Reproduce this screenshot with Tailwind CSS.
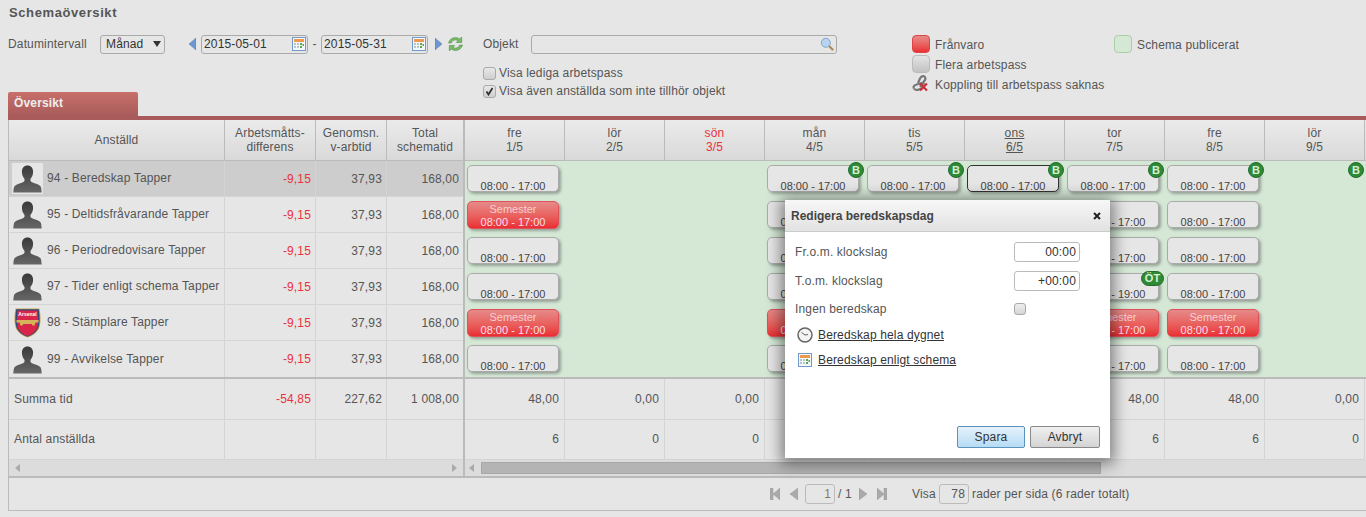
<!DOCTYPE html>
<html lang="sv"><head><meta charset="utf-8"><title>Schemaöversikt</title>
<script src="https://cdn.jsdelivr.net/npm/@tailwindcss/browser@4"></script></head>
<body class="m-0 w-[1366px] h-[517px] overflow-hidden relative bg-[#e6e6e6] font-['Liberation_Sans',Arial,sans-serif] text-[12px] text-[#555] tracking-[0.15px]">
<svg width="0" height="0" class="absolute"><defs>
<linearGradient id="sil" x1="0" y1="0" x2="0" y2="1"><stop offset="0" stop-color="#3a3a3a"/><stop offset="1" stop-color="#666"/></linearGradient>
<symbol id="person" viewBox="0 0 31 31"><path fill="url(#sil)" d="M15.500 2.500c3.600 0 5.600 2.700 5.600 6.200 0 3-1 5.300-2.500 7-.4 1.600-.1 2.700 1 3.400 2.500 1.300 6.800 2.100 8.700 4 .9 1 1.200 3.700 1.400 6.400H1.300c.2-2.700.5-5.400 1.400-6.400 1.900-1.900 6.200-2.700 8.700-4 1.100-.7 1.400-1.800 1-3.400-1.500-1.700-2.500-4-2.500-7 0-3.500 2-6.200 5.600-6.200z"/></symbol>
<symbol id="cal" viewBox="0 0 14 14"><rect x=".5" y=".5" width="13" height="13" fill="#f4f7fb" stroke="#6f9acb"/><rect x="2" y="2" width="10" height="3" fill="#ee9a4d"/><path fill="#b9c4cf" d="M2 6h2v2H2zM5 6h2v2H5zM2 9h2v2H2zM5 9h2v2H5z"/><path fill="#58a84f" d="M8 6h2v2H8zM8 9h2v2H8zM10.500 7h1.500v2h-1.500z"/></symbol>
</defs></svg>

<!-- Filter area -->
<header class="h-[92px]">
  <h1 class="pl-[9px] pt-[5px] h-[34px] text-[13px] leading-[16px] font-bold text-[#555] tracking-[0.6px]">Schemaöversikt</h1>
  <div class="flex items-start pl-[8px]">
    <div class="w-[475px] h-[20px] flex items-center">
      <span class="w-[92px]">Datumintervall</span>
      <div class="w-[65px] h-[19px] rounded-[3px] border border-[#aaa] flex items-center justify-between pl-[5px] pr-[3px] text-[#333]"><span>Månad</span><svg width="8" height="6" viewBox="0 0 8 6"><path fill="#333" d="M0 0h8L4 6z"/></svg></div>
      <svg class="ml-[24px]" width="7" height="12" viewBox="0 0 7 12"><path fill="#6c97cf" stroke="#4f79b3" stroke-width=".5" d="M7 0v12L0 6z"/></svg>
      <div class="ml-[5px] w-[107px] h-[19px] rounded-[3px] border border-[#aaa] flex items-center justify-between pl-[2px] pr-[1px] text-[#333]"><span>2015-05-01</span><svg width="14" height="14"><use href="#cal"/></svg></div>
      <span class="w-[13px] text-center">-</span>
      <div class="w-[107px] h-[19px] rounded-[3px] border border-[#aaa] flex items-center justify-between pl-[2px] pr-[1px] text-[#333]"><span>2015-05-31</span><svg width="14" height="14"><use href="#cal"/></svg></div>
      <svg class="ml-[7px]" width="7" height="12" viewBox="0 0 7 12"><path fill="#6c97cf" stroke="#4f79b3" stroke-width=".5" d="M0 0v12l7-6z"/></svg>
      <svg class="ml-[5px]" width="17" height="16" viewBox="0 0 16 15"><path fill="#7dbb6a" stroke="#4c8f45" stroke-width=".6" d="M1.500 6.500C2.300 3 5 1.500 8 1.500c1.700 0 3 .5 4 1.400L13.800 1v5h-5l1.600-1.600C9.700 3.800 9 3.600 8 3.600c-1.700 0-3.300 1-3.900 2.900zM14.500 8.500C13.700 12 11 13.500 8 13.500c-1.700 0-3-.5-4-1.400L2.200 14V9h5l-1.600 1.600c.7.6 1.400.8 2.400.8 1.700 0 3.300-1 3.900-2.900z"/></svg>
    </div>
    <div class="w-[429px]">
      <div class="h-[20px] flex items-center">
        <span class="w-[48px]">Objekt</span>
        <div class="w-[306px] h-[19px] rounded-[3px] border border-[#aaa] flex items-center justify-end pr-[2px]"><svg width="14" height="14" viewBox="0 0 14 14"><path stroke="#b08a5a" stroke-width="2.400" stroke-linecap="round" d="M9 9l3.500 3.500"/><circle cx="5.800" cy="5.800" r="4.500" fill="#b8d4f0" stroke="#7fa6d2"/></svg></div>
      </div>
      <label class="mt-[10px] h-[18px] flex items-center gap-[3px]"><span class="w-[13px] h-[13px] rounded-[3px] border border-[#aaa] bg-gradient-to-b from-[#e8e8e8] to-[#cfcfcf]"></span>Visa lediga arbetspass</label>
      <label class="h-[18px] flex items-center gap-[3px]"><span class="w-[13px] h-[13px] rounded-[3px] border border-[#aaa] bg-gradient-to-b from-[#e8e8e8] to-[#cfcfcf] flex items-center justify-center"><svg width="9" height="9" viewBox="0 0 9 9"><path fill="none" stroke="#333" stroke-width="1.800" d="M1.500 4.500l2 3L7.500 1"/></svg></span>Visa även anställda som inte tillhör objekt</label>
    </div>
    <div class="w-[202px]">
      <div class="h-[20px] flex items-center gap-[5px]"><span class="w-[18px] h-[18px] rounded-[4px] border border-[#d44] bg-gradient-to-b from-[#e58a8a] to-[#e92c33]"></span><span class="pt-[2px]">Frånvaro</span></div>
      <div class="h-[20px] flex items-center gap-[5px]"><span class="w-[18px] h-[18px] rounded-[4px] border border-[#bbb] bg-gradient-to-b from-[#e4e4e4] to-[#c2c2c2]"></span><span class="pt-[2px]">Flera arbetspass</span></div>
      <div class="h-[20px] flex items-center gap-[5px]"><svg width="18" height="18" viewBox="0 0 18 18"><g fill="none" stroke="#777" stroke-width="2.200"><path d="M8 12l5-7c1-2 0-3.500-1.500-3.800S9 1.500 8 3.500L6 8"/><path d="M2 13.500c-1-1.500 0-3.300 2-3.800l5-1.500c1.500-.4 2.800.5 3 1.500"/><path d="M2 13.500c1 1.500 3 1.700 5 1l4-1.500"/></g><path stroke="#c9303a" stroke-width="2.200" d="M8 8.500l7 7M15 8.500l-7 7"/></svg><span class="pt-[2px]">Koppling till arbetspass saknas</span></div>
    </div>
    <div class="flex items-center gap-[5px] h-[20px]"><span class="w-[18px] h-[18px] rounded-[4px] border border-[#a9cfa9] bg-[#d5e8d6]"></span><span class="pt-[2px]">Schema publicerat</span></div>
  </div>
</header>

<!-- Tab -->
<div class="pl-[8px] h-[24px]"><div class="w-[130px] h-[24px] rounded-t-[2px] bg-gradient-to-b from-[#c76f6b] to-[#a95c5a] pl-[6px] pt-[4px] font-bold text-[#eee] leading-[15px]">Översikt</div></div>
<div class="ml-[8px] h-[4px] bg-[#a85b5a]"></div>

<!-- Table -->
<main class="ml-[8px] border-l border-[#bbb] flex h-[358px] border-b border-b-[#bbb]">
  <section class="w-[456px] shrink-0 border-r-2 border-[#bbb]">
    <div class="grid grid-cols-[216px_91px_71px_76px] h-[41px] border-b border-[#bbb] bg-gradient-to-b from-[#ebebeb] to-[#d9d9d9] text-center leading-[14px]">
      <div class="border-r border-[#bbb] flex items-center justify-center">Anställd</div>
      <div class="border-r border-[#bbb] flex items-center justify-center">Arbetsmåtts-<br>differens</div>
      <div class="border-r border-[#bbb] flex items-center justify-center">Genomsn.<br>v-arbtid</div>
      <div class="flex items-center justify-center">Total<br>schematid</div>
    </div>
    <div class="grid grid-cols-[216px_91px_71px_76px] auto-rows-[36px] [&>div]:border-b [&>div]:border-[#d4d4d4] [&>div]:flex [&>div]:items-center whitespace-nowrap">
      <div class="border-r bg-[#cdcdcd] pl-[3px] gap-[4px]"><span class="bg-[#e6e6e6] w-[31px] h-[31px]"><svg width="31" height="31"><use href="#person"/></svg></span><span class="pb-[1px]">94 - Beredskap Tapper</span></div>
      <div class="border-r bg-[#cdcdcd] justify-end pr-[4px] text-[#e8323c]">-9,15</div><div class="border-r bg-[#cdcdcd] justify-end pr-[4px]">37,93</div><div class="bg-[#cdcdcd] justify-end pr-[4px]">168,00</div>
      <div class="border-r pl-[3px] gap-[4px]"><svg width="31" height="31"><use href="#person"/></svg><span class="pb-[1px]">95 - Deltidsfråvarande Tapper</span></div>
      <div class="border-r justify-end pr-[4px] text-[#e8323c]">-9,15</div><div class="border-r justify-end pr-[4px]">37,93</div><div class="justify-end pr-[4px]">168,00</div>
      <div class="border-r pl-[3px] gap-[4px]"><svg width="31" height="31"><use href="#person"/></svg><span class="pb-[1px]">96 - Periodredovisare Tapper</span></div>
      <div class="border-r justify-end pr-[4px] text-[#e8323c]">-9,15</div><div class="border-r justify-end pr-[4px]">37,93</div><div class="justify-end pr-[4px]">168,00</div>
      <div class="border-r pl-[3px] gap-[4px]"><svg width="31" height="31"><use href="#person"/></svg><span class="pb-[1px]">97 - Tider enligt schema Tapper</span></div>
      <div class="border-r justify-end pr-[4px] text-[#e8323c]">-9,15</div><div class="border-r justify-end pr-[4px]">37,93</div><div class="justify-end pr-[4px]">168,00</div>
      <div class="border-r pl-[3px] gap-[4px]"><svg width="31" height="31" viewBox="0 0 31 31"><path fill="#c8a24a" d="M3.500 1.500h24c1.500 8 1.500 16-1 21-2.500 4-6.500 6.500-11 8-4.500-1.500-8.500-4-11-8-2.500-5-2.500-13-1-21z"/><path fill="#2b4a7a" d="M4.300 2.300h22.400c1.300 7.500 1.300 15.500-1 20-2.300 3.800-6 6.200-10.200 7.500-4.200-1.300-7.900-3.700-10.200-7.500-2.300-4.500-2.300-12.500-1-20z"/><path fill="#d9254a" d="M5.500 3.500h20c1 7 1 14.500-1 18.800-2 3.400-5.200 5.500-9 6.700-3.800-1.200-7-3.300-9-6.700-2-4.300-2-11.800-1-18.800z"/><path fill="#d6b35a" d="M4.500 13h22v2.500h-3l-1 3h-2l-.7-1.500h-8.600l-.7 1.500h-2l-1-3h-3z"/><text x="15.500" y="9" text-anchor="middle" font-size="5" font-weight="700" fill="#fff" letter-spacing="0">Arsenal</text></svg><span class="pb-[1px]">98 - Stämplare Tapper</span></div>
      <div class="border-r justify-end pr-[4px] text-[#e8323c]">-9,15</div><div class="border-r justify-end pr-[4px]">37,93</div><div class="justify-end pr-[4px]">168,00</div>
      <div class="border-r pl-[3px] gap-[4px] !border-b-0"><svg width="31" height="31"><use href="#person"/></svg><span class="pb-[1px]">99 - Avvikelse Tapper</span></div>
      <div class="border-r justify-end pr-[4px] text-[#e8323c] !border-b-0">-9,15</div><div class="border-r justify-end pr-[4px] !border-b-0">37,93</div><div class="justify-end pr-[4px] !border-b-0">168,00</div>
    </div>
    <div class="grid grid-cols-[216px_91px_71px_76px] border-t-2 border-[#bbb] [&>div]:border-b [&>div]:border-[#d4d4d4] [&>div]:flex [&>div]:items-center">
      <div class="h-[41px] border-r pl-[5px]">Summa tid</div><div class="h-[41px] border-r justify-end pr-[4px] text-[#e8323c]">-54,85</div><div class="h-[41px] border-r justify-end pr-[4px]">227,62</div><div class="h-[41px] justify-end pr-[4px]">1 008,00</div>
      <div class="h-[40px] border-r pl-[5px] pb-[2px]">Antal anställda</div><div class="h-[40px] border-r"></div><div class="h-[40px] border-r"></div><div class="h-[40px]"></div>
    </div>
    <div class="h-[17px] bg-[#dcdcdc] border-b border-b-[#bbb] flex items-center justify-between px-[6px]"><svg width="5" height="8"><path fill="#aaa" d="M5 0v8L0 4z"/></svg><svg width="5" height="8"><path fill="#aaa" d="M0 0v8l5-4z"/></svg></div>
  </section>
  <section class="flex-1 min-w-0 overflow-hidden">
    <div class="grid grid-cols-[repeat(9,100px)] h-[41px] border-b border-[#bbb] bg-gradient-to-b from-[#ebebeb] to-[#d9d9d9] text-center leading-[14px] [&>div]:border-r [&>div]:border-[#bbb] [&>div]:pt-[6px]">
      <div>fre<br>1/5</div><div>lör<br>2/5</div><div class="text-[#e8323c]">sön<br>3/5</div><div>mån<br>4/5</div><div>tis<br>5/5</div><div class="underline">ons<br>6/5</div><div>tor<br>7/5</div><div>fre<br>8/5</div><div>lör<br>9/5</div>
    </div>
    <div class="grid grid-cols-[repeat(9,100px)] auto-rows-[36px] bg-[#d5e8d6] text-center text-[11px] tracking-normal leading-[13px] text-[#444]">
      <!-- 94 -->
      <div><div class="ml-[2px] mt-[4px] w-[92px] h-[27px] rounded-[5px] border border-[#aaa] bg-[#e6e6e6] shadow-[2px_2px_3px_rgba(0,0,0,.3)] pt-[14px]">08:00 - 17:00</div></div><div></div><div></div>
      <div class="relative"><div class="ml-[2px] mt-[4px] w-[92px] h-[27px] rounded-[5px] border border-[#aaa] bg-[#e6e6e6] shadow-[2px_2px_3px_rgba(0,0,0,.3)] pt-[14px]">08:00 - 17:00</div><span class="absolute right-[1px] top-[1px] w-[16px] h-[16px] rounded-full bg-[#2f8a36] border border-[#236b2a] text-[#d8f0d8] font-bold text-[11px] leading-[14px] tracking-normal">B</span></div>
      <div class="relative"><div class="ml-[2px] mt-[4px] w-[92px] h-[27px] rounded-[5px] border border-[#aaa] bg-[#e6e6e6] shadow-[2px_2px_3px_rgba(0,0,0,.3)] pt-[14px]">08:00 - 17:00</div><span class="absolute right-[1px] top-[1px] w-[16px] h-[16px] rounded-full bg-[#2f8a36] border border-[#236b2a] text-[#d8f0d8] font-bold text-[11px] leading-[14px] tracking-normal">B</span></div>
      <div class="relative"><div class="ml-[2px] mt-[4px] w-[92px] h-[27px] rounded-[5px] border border-[#333] bg-[#e6e6e6] shadow-[2px_2px_3px_rgba(0,0,0,.3)] pt-[14px]">08:00 - 17:00</div><span class="absolute right-[1px] top-[1px] w-[16px] h-[16px] rounded-full bg-[#2f8a36] border border-[#236b2a] text-[#d8f0d8] font-bold text-[11px] leading-[14px] tracking-normal">B</span></div>
      <div class="relative"><div class="ml-[2px] mt-[4px] w-[92px] h-[27px] rounded-[5px] border border-[#aaa] bg-[#e6e6e6] shadow-[2px_2px_3px_rgba(0,0,0,.3)] pt-[14px]">08:00 - 17:00</div><span class="absolute right-[1px] top-[1px] w-[16px] h-[16px] rounded-full bg-[#2f8a36] border border-[#236b2a] text-[#d8f0d8] font-bold text-[11px] leading-[14px] tracking-normal">B</span></div>
      <div class="relative"><div class="ml-[2px] mt-[4px] w-[92px] h-[27px] rounded-[5px] border border-[#aaa] bg-[#e6e6e6] shadow-[2px_2px_3px_rgba(0,0,0,.3)] pt-[14px]">08:00 - 17:00</div><span class="absolute right-[1px] top-[1px] w-[16px] h-[16px] rounded-full bg-[#2f8a36] border border-[#236b2a] text-[#d8f0d8] font-bold text-[11px] leading-[14px] tracking-normal">B</span></div>
      <div class="relative"><span class="absolute right-[1px] top-[1px] w-[16px] h-[16px] rounded-full bg-[#2f8a36] border border-[#236b2a] text-[#d8f0d8] font-bold text-[11px] leading-[14px] tracking-normal">B</span></div>
      <!-- 95 -->
      <div><div class="ml-[2px] mt-[4px] w-[92px] h-[28px] rounded-[5px] border border-[#e05058] bg-gradient-to-b from-[#e58a8a] to-[#e92c33] shadow-[2px_2px_3px_rgba(0,0,0,.3)] text-[#fde] pt-[1px]"><span class="block text-[#f6cfcf]">Semester</span>08:00 - 17:00</div></div><div></div><div></div>
      <div><div class="ml-[2px] mt-[4px] w-[92px] h-[27px] rounded-[5px] border border-[#aaa] bg-[#e6e6e6] shadow-[2px_2px_3px_rgba(0,0,0,.3)] pt-[14px]">08:00 - 17:00</div></div><div></div><div></div>
      <div><div class="ml-[2px] mt-[4px] w-[92px] h-[27px] rounded-[5px] border border-[#aaa] bg-[#e6e6e6] shadow-[2px_2px_3px_rgba(0,0,0,.3)] pt-[14px]">08:00 - 17:00</div></div>
      <div><div class="ml-[2px] mt-[4px] w-[92px] h-[27px] rounded-[5px] border border-[#aaa] bg-[#e6e6e6] shadow-[2px_2px_3px_rgba(0,0,0,.3)] pt-[14px]">08:00 - 17:00</div></div><div></div>
      <!-- 96 -->
      <div><div class="ml-[2px] mt-[4px] w-[92px] h-[27px] rounded-[5px] border border-[#aaa] bg-[#e6e6e6] shadow-[2px_2px_3px_rgba(0,0,0,.3)] pt-[14px]">08:00 - 17:00</div></div><div></div><div></div>
      <div><div class="ml-[2px] mt-[4px] w-[92px] h-[27px] rounded-[5px] border border-[#aaa] bg-[#e6e6e6] shadow-[2px_2px_3px_rgba(0,0,0,.3)] pt-[14px]">08:00 - 17:00</div></div><div></div><div></div>
      <div><div class="ml-[2px] mt-[4px] w-[92px] h-[27px] rounded-[5px] border border-[#aaa] bg-[#e6e6e6] shadow-[2px_2px_3px_rgba(0,0,0,.3)] pt-[14px]">08:00 - 17:00</div></div>
      <div><div class="ml-[2px] mt-[4px] w-[92px] h-[27px] rounded-[5px] border border-[#aaa] bg-[#e6e6e6] shadow-[2px_2px_3px_rgba(0,0,0,.3)] pt-[14px]">08:00 - 17:00</div></div><div></div>
      <!-- 97 -->
      <div><div class="ml-[2px] mt-[4px] w-[92px] h-[27px] rounded-[5px] border border-[#aaa] bg-[#e6e6e6] shadow-[2px_2px_3px_rgba(0,0,0,.3)] pt-[14px]">08:00 - 17:00</div></div><div></div><div></div>
      <div><div class="ml-[2px] mt-[4px] w-[92px] h-[27px] rounded-[5px] border border-[#aaa] bg-[#e6e6e6] shadow-[2px_2px_3px_rgba(0,0,0,.3)] pt-[14px]">08:00 - 17:00</div></div><div></div><div></div>
      <div class="relative"><div class="ml-[2px] mt-[4px] w-[92px] h-[27px] rounded-[5px] border border-[#aaa] bg-[#e6e6e6] shadow-[2px_2px_3px_rgba(0,0,0,.3)] pt-[14px]">08:00 - 19:00</div><span class="absolute right-[1px] top-[2px] w-[23px] h-[15px] rounded-full bg-[#2f8a36] border border-[#236b2a] text-[#d8f0d8] font-bold text-[11px] leading-[13px] tracking-normal">ÖT</span></div>
      <div><div class="ml-[2px] mt-[4px] w-[92px] h-[27px] rounded-[5px] border border-[#aaa] bg-[#e6e6e6] shadow-[2px_2px_3px_rgba(0,0,0,.3)] pt-[14px]">08:00 - 17:00</div></div><div></div>
      <!-- 98 -->
      <div><div class="ml-[2px] mt-[4px] w-[92px] h-[28px] rounded-[5px] border border-[#e05058] bg-gradient-to-b from-[#e58a8a] to-[#e92c33] shadow-[2px_2px_3px_rgba(0,0,0,.3)] text-[#fde] pt-[1px]"><span class="block text-[#f6cfcf]">Semester</span>08:00 - 17:00</div></div><div></div><div></div>
      <div><div class="ml-[2px] mt-[4px] w-[92px] h-[28px] rounded-[5px] border border-[#e05058] bg-gradient-to-b from-[#e58a8a] to-[#e92c33] shadow-[2px_2px_3px_rgba(0,0,0,.3)] text-[#fde] pt-[1px]"><span class="block text-[#f6cfcf]">Semester</span>08:00 - 17:00</div></div><div></div><div></div>
      <div><div class="ml-[2px] mt-[4px] w-[92px] h-[28px] rounded-[5px] border border-[#e05058] bg-gradient-to-b from-[#e58a8a] to-[#e92c33] shadow-[2px_2px_3px_rgba(0,0,0,.3)] text-[#fde] pt-[1px]"><span class="block text-[#f6cfcf]">Semester</span>08:00 - 17:00</div></div>
      <div><div class="ml-[2px] mt-[4px] w-[92px] h-[28px] rounded-[5px] border border-[#e05058] bg-gradient-to-b from-[#e58a8a] to-[#e92c33] shadow-[2px_2px_3px_rgba(0,0,0,.3)] text-[#fde] pt-[1px]"><span class="block text-[#f6cfcf]">Semester</span>08:00 - 17:00</div></div><div></div>
      <!-- 99 -->
      <div><div class="ml-[2px] mt-[4px] w-[92px] h-[27px] rounded-[5px] border border-[#aaa] bg-[#e6e6e6] shadow-[2px_2px_3px_rgba(0,0,0,.3)] pt-[14px]">08:00 - 17:00</div></div><div></div><div></div>
      <div><div class="ml-[2px] mt-[4px] w-[92px] h-[27px] rounded-[5px] border border-[#aaa] bg-[#e6e6e6] shadow-[2px_2px_3px_rgba(0,0,0,.3)] pt-[14px]">08:00 - 17:00</div></div><div></div><div></div>
      <div><div class="ml-[2px] mt-[4px] w-[92px] h-[27px] rounded-[5px] border border-[#aaa] bg-[#e6e6e6] shadow-[2px_2px_3px_rgba(0,0,0,.3)] pt-[14px]">08:00 - 17:00</div></div>
      <div><div class="ml-[2px] mt-[4px] w-[92px] h-[27px] rounded-[5px] border border-[#aaa] bg-[#e6e6e6] shadow-[2px_2px_3px_rgba(0,0,0,.3)] pt-[14px]">08:00 - 17:00</div></div><div></div>
    </div>
    <div class="grid grid-cols-[repeat(9,100px)] border-t-2 border-[#bbb] text-right [&>div]:border-r [&>div]:border-b [&>div]:border-[#d4d4d4] [&>div]:pr-[5px] [&>div]:flex [&>div]:items-center [&>div]:justify-end">
      <div class="h-[41px]">48,00</div><div class="h-[41px]">0,00</div><div class="h-[41px]">0,00</div><div class="h-[41px]">48,00</div><div class="h-[41px]">48,00</div><div class="h-[41px]">48,00</div><div class="h-[41px]">48,00</div><div class="h-[41px]">48,00</div><div class="h-[41px]">0,00</div>
      <div class="h-[40px] pb-[2px]">6</div><div class="h-[40px] pb-[2px]">0</div><div class="h-[40px] pb-[2px]">0</div><div class="h-[40px] pb-[2px]">6</div><div class="h-[40px] pb-[2px]">6</div><div class="h-[40px] pb-[2px]">6</div><div class="h-[40px] pb-[2px]">6</div><div class="h-[40px] pb-[2px]">6</div><div class="h-[40px] pb-[2px]">0</div>
    </div>
    <div class="h-[17px] bg-[#dcdcdc] border-b border-b-[#bbb] flex items-center pl-[4px]"><svg width="5" height="8"><path fill="#aaa" d="M5 0v8L0 4z"/></svg><div class="ml-[7px] w-[620px] h-[12px] bg-[#b4b4b4] border border-[#a8a8a8]"></div></div>
  </section>
</main>

<!-- Pager -->
<footer class="ml-[8px] h-[34px] border-l border-b border-[#bbb] flex items-center pl-[761px] -mt-[1px]">
  <svg width="10" height="12" viewBox="0 0 10 12"><path fill="#aaa" stroke="#999" stroke-width=".5" d="M0 0h3v12H0zM10 0v12L3 6z"/></svg>
  <svg class="ml-[10px]" width="8" height="12" viewBox="0 0 8 12"><path fill="#aaa" stroke="#999" stroke-width=".5" d="M8 0v12L0 6z"/></svg>
  <div class="ml-[7px] w-[30px] h-[20px] rounded-[3px] border border-[#bbb] text-right pr-[3px] leading-[18px] text-[#8a7a55]">1</div>
  <span class="ml-[3px] w-[12px] whitespace-nowrap">/ 1</span>
  <svg class="ml-[9px]" width="8" height="12" viewBox="0 0 8 12"><path fill="#aaa" stroke="#999" stroke-width=".5" d="M0 0v12l8-6z"/></svg>
  <svg class="ml-[10px]" width="10" height="12" viewBox="0 0 10 12"><path fill="#aaa" stroke="#999" stroke-width=".5" d="M10 0H7v12h3zM0 0v12l7-6z"/></svg>
  <span class="ml-[25px] w-[27px]">Visa</span>
  <div class="w-[30px] h-[20px] rounded-[3px] border border-[#bbb] text-right pr-[3px] leading-[18px] text-[#555]">78</div>
  <span class="ml-[3px]">rader per sida (6 rader totalt)</span>
</footer>

<!-- Dialog -->
<div class="absolute left-[785px] top-[200px] w-[325px] h-[258px] bg-white shadow-[0_2px_14px_4px_rgba(0,0,0,.45)] flex flex-col">
  <div class="h-[32px] shrink-0 border-b border-[#ccc] bg-gradient-to-b from-[#f7f7f7] to-[#e2e2e2] flex items-center justify-between pl-[6px] pr-[9px]">
    <span class="font-bold text-[#444] tracking-normal">Redigera beredskapsdag</span>
    <svg width="8" height="8" viewBox="0 0 8 8"><path stroke="#222" stroke-width="2" d="M1 1l6 6M7 1L1 7"/></svg>
  </div>
  <div class="flex-1 pl-[10px] pr-[30px] pt-[10px] flex flex-col">
    <div class="h-[20px] flex items-center justify-between"><span>Fr.o.m. klockslag</span><div class="w-[66px] h-[20px] rounded-[3px] border border-[#bbb] text-right pr-[3px] leading-[18px] text-[#333]">00:00</div></div>
    <div class="mt-[9px] h-[20px] flex items-center justify-between"><span>T.o.m. klockslag</span><div class="w-[66px] h-[20px] rounded-[3px] border border-[#bbb] text-right pr-[3px] leading-[18px] text-[#333]">+00:00</div></div>
    <div class="mt-[8px] h-[20px] flex items-center"><span class="w-[219px]">Ingen beredskap</span><span class="w-[12px] h-[12px] rounded-[3px] border border-[#aaa] bg-gradient-to-b from-[#eee] to-[#d6d6d6]"></span></div>
    <a class="mt-[6px] h-[20px] flex items-center gap-[5px] text-[#333] underline"><svg class="ml-[2px]" width="16" height="16" viewBox="0 0 16 16"><circle cx="8" cy="8" r="7" fill="#f3f3f3" stroke="#666" stroke-width="1.500"/><path fill="none" stroke="#666" d="M8 8L4.500 5.500M8 8l3-.5"/></svg>Beredskap hela dygnet</a>
    <a class="mt-[5px] h-[20px] flex items-center gap-[6px] text-[#333] underline"><svg class="ml-[3px]" width="14" height="14"><use href="#cal"/></svg>Beredskap enligt schema</a>
    <div class="mt-auto mb-[10px] -mr-[20px] flex justify-end gap-[5px] text-[#333]">
      <button class="w-[68px] h-[22px] rounded-[2px] border border-[#5b93bd] bg-gradient-to-b from-[#e6f2fa] to-[#b5dcf5]">Spara</button>
      <button class="w-[70px] h-[22px] rounded-[2px] border border-[#888] bg-gradient-to-b from-[#f0f0f0] to-[#d4d4d4]">Avbryt</button>
    </div>
  </div>
</div>
</body></html>
